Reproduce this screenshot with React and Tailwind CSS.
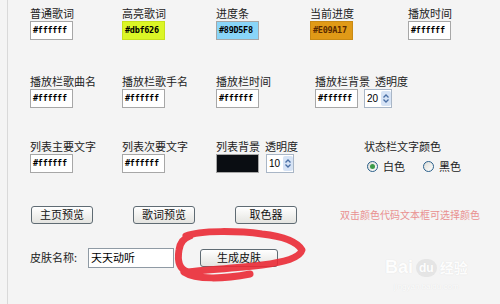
const cjk = { fontFamily: '"Noto Sans CJK SC", "Noto Sans", sans-serif' }
const mono = { fontFamily: '"DejaVu Sans Mono", "Liberation Mono", monospace' }

function ColorBox({ value, className = '' }) {
  return (
    <div
      className={`flex h-[19px] w-[43px] items-center border border-[#a7a7a7] pl-[2px] text-[8.5px] font-semibold tracking-[-0.3px] ${className}`}
      style={mono}
    >
      {value}
    </div>
  )
}

function Spin({ value }) {
  return (
    <div className="flex h-[19px] w-[28px] items-center border border-[#a9b6c6] bg-white pl-[2px]">
      <span className="flex-1 text-[10px] text-black" style={{ fontFamily: '"Liberation Sans", sans-serif' }}>{value}</span>
      <div className="flex h-[15px] w-[10px] flex-col items-center justify-center gap-[1px] rounded-[2px] bg-[#d6e3f5]">
        <svg width="6" height="4" viewBox="0 0 6 4"><path d="M0.5 3.5 L3 1 L5.5 3.5" stroke="#4a6fa5" strokeWidth="1.3" fill="none" /></svg>
        <svg width="6" height="4" viewBox="0 0 6 4"><path d="M0.5 0.5 L3 3 L5.5 0.5" stroke="#4a6fa5" strokeWidth="1.3" fill="none" /></svg>
      </div>
    </div>
  )
}

function Field({ label, value, box, w }) {
  return (
    <div className={`flex flex-col gap-[2px] ${w}`}>
      <span className="text-[11px] leading-[12px] text-[#222]" style={cjk}>{label}</span>
      <ColorBox value={value} className={box} />
    </div>
  )
}

function Btn({ children, w }) {
  return (
    <div
      className={`flex h-[18px] ${w} items-center justify-center rounded-[3px] border border-[#5f6b73] bg-gradient-to-b from-white to-[#e4e4e0] text-[11px] text-[#111]`}
      style={cjk}
    >
      {children}
    </div>
  )
}

function Radio({ checked, label }) {
  return (
    <div className="flex items-center gap-[5px]">
      <div className="flex h-[11px] w-[11px] items-center justify-center rounded-full border border-[#2a5f8a] bg-gradient-to-br from-[#dcdcd6] to-white">
        {checked && <div className="h-[5px] w-[5px] rounded-full bg-[#3c9a4a]" />}
      </div>
      <span className="text-[11px] text-[#222]" style={cjk}>{label}</span>
    </div>
  )
}

export default function App() {
  return (
    <div className="relative h-[304px] w-[500px] overflow-hidden bg-[#f4f4f4]">
      <div className="absolute left-[7px] top-0 h-full w-px bg-[#d9d9d9]" />

      <div className="flex flex-col pl-[30px] pt-[7px]">
        <div className="flex">
          <Field label="普通歌词" value="#ffffff" box="bg-white" w="w-[92px]" />
          <Field label="高亮歌词" value="#dbf626" box="bg-[#dbf626] border-[#c8e01c]" w="w-[94px]" />
          <Field label="进度条" value="#89D5F8" box="bg-[#89d5f8] border-[#7ec4e4]" w="w-[94px]" />
          <Field label="当前进度" value="#E09A17" box="bg-[#e09a17] border-[#c98a14] text-[#5a2a00]" w="w-[98px]" />
          <Field label="播放时间" value="#ffffff" box="bg-white" w="w-[60px]" />
        </div>

        <div className="mt-[35px] flex">
          <Field label="播放栏歌曲名" value="#ffffff" box="bg-white" w="w-[92px]" />
          <Field label="播放栏歌手名" value="#ffffff" box="bg-white" w="w-[94px]" />
          <Field label="播放栏时间" value="#ffffff" box="bg-white" w="w-[99px]" />
          <div className="flex flex-col gap-[2px]">
            <span className="text-[11px] leading-[12px] text-[#222]" style={cjk}>播放栏背景&nbsp;&nbsp;透明度</span>
            <div className="flex gap-[6px]">
              <ColorBox value="#ffffff" className="bg-white" />
              <Spin value="20" />
            </div>
          </div>
        </div>

        <div className="mt-[32px] flex">
          <Field label="列表主要文字" value="#ffffff" box="bg-white" w="w-[92px]" />
          <Field label="列表次要文字" value="#ffffff" box="bg-white" w="w-[94px]" />
          <div className="flex w-[148px] flex-col gap-[2px]">
            <span className="text-[11px] leading-[12px] text-[#222]" style={cjk}>列表背景&nbsp;&nbsp;透明度</span>
            <div className="flex gap-[7px]">
              <ColorBox value="" className="bg-[#0a0d12] border-[#222]" />
              <Spin value="10" />
            </div>
          </div>
          <div className="flex flex-col gap-[6px]">
            <span className="text-[11px] leading-[12px] text-[#222]" style={cjk}>状态栏文字颜色</span>
            <div className="flex gap-[18px] pl-[3px]">
              <Radio checked label="白色" />
              <Radio label="黑色" />
            </div>
          </div>
        </div>

        <div className="mt-[31px] flex items-center pl-[1px]">
          <Btn w="w-[62px]">主页预览</Btn>
          <div className="w-[40px]" />
          <Btn w="w-[62px]">歌词预览</Btn>
          <div className="w-[40px]" />
          <Btn w="w-[62px]">取色器</Btn>
          <span className="ml-[43px] text-[10px] text-[#e99090]" style={cjk}>双击颜色代码文本框可选择颜色</span>
        </div>

        <div className="mt-[24px] flex items-center">
          <span className="w-[58px] text-[11px] text-[#222]" style={cjk}>皮肤名称:</span>
          <div className="flex h-[20px] w-[86px] items-center border border-[#8f9aa4] bg-white pl-[2px] text-[11px] text-black" style={cjk}>
            天天动听
          </div>
          <div className="w-[26px]" />
          <Btn w="w-[78px]">生成皮肤</Btn>
        </div>
      </div>

      <svg className="pointer-events-none absolute left-0 top-0" width="500" height="304" viewBox="0 0 500 304">
        <path
          d="M186 236 C200 230 240 231 262 234 C280 236 296 240 302 250 C300 258 284 262 262 265 C236 268 206 270 188 272 C180 270 177 262 179 250 C180 242 184 238 190 236 M184 272 C196 280 224 279 250 274"
          stroke="#ea2a35"
          strokeWidth="7"
          fill="none"
          strokeLinecap="round"
          strokeLinejoin="round"
          opacity="0.9"
        />
      </svg>

      <div className="pointer-events-none absolute left-[385px] top-[254px] flex flex-col items-center opacity-90">
        <div className="flex items-center gap-[3px] text-[18px] font-bold text-white" style={{ fontFamily: '"Liberation Sans", sans-serif', textShadow: '0 0 1px #d8d8d8' }}>
          <span>Bai</span>
          <span className="rounded-full bg-[#e4e4e4] px-[3px] text-[12px]">du</span>
          <span className="text-[14px]" style={cjk}>经验</span>
        </div>
        <span className="text-[8px] text-white" style={{ fontFamily: '"Liberation Sans", sans-serif', textShadow: '0 0 1px #d8d8d8' }}>jingyan.baidu.com</span>
      </div>
    </div>
  )
}
